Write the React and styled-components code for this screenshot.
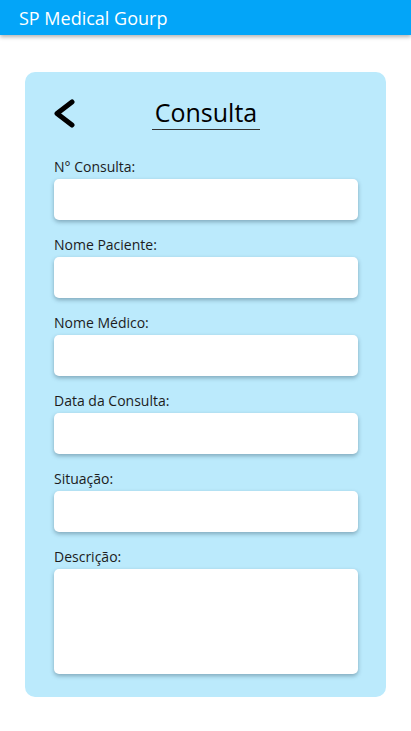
import React from 'react';
import styled, { createGlobalStyle } from 'styled-components';

const GlobalStyle = createGlobalStyle`
	* {
		box-sizing: border-box;
	}
	body {
		margin: 0;
		background: #ffffff;
		font-family: 'Open Sans', 'Noto Sans', sans-serif;
	}
`;

const fields = [
	{ label: 'N° Consulta:' },
	{ label: 'Nome Paciente:' },
	{ label: 'Nome Médico:' },
	{ label: 'Data da Consulta:' },
	{ label: 'Situação:' },
	{ label: 'Descrição:', tall: true },
];

const BackIcon = () => (
	<svg width='22' height='30' viewBox='0 0 22 30'>
		<polyline
			points='19,3 4,14.5 19,26'
			fill='none'
			stroke='#000'
			strokeWidth='5'
			strokeLinecap='round'
			strokeLinejoin='round'
		/>
	</svg>
);

const App = () => {
	return (
		<>
			<GlobalStyle />
			<Page>
				<AppBar>
					<AppTitle>SP Medical Gourp</AppTitle>
				</AppBar>
				<Card>
					<CardHeader>
						<BackButton>
							<BackIcon />
						</BackButton>
						<Title>Consulta</Title>
					</CardHeader>
					<Form>
						{fields.map((field) => (
							<Field key={field.label}>
								<Label>{field.label}</Label>
								<Input tall={field.tall} />
							</Field>
						))}
					</Form>
				</Card>
			</Page>
		</>
	);
};

const Page = styled.div`
	width: 411px;
	min-height: 731px;
`;

const AppBar = styled.header`
	height: 35px;
	background: #03a5f8;
	box-shadow: 0 2px 4px rgba(0, 0, 0, 0.3);
	display: flex;
	align-items: center;
	padding-left: 19px;
`;

const AppTitle = styled.h1`
	margin: 0;
	color: #ffffff;
	font-size: 18px;
	font-weight: 400;
	line-height: 24px;
`;

const Card = styled.main`
	margin: 37px 0 0 25px;
	width: 361px;
	background: #bbeafc;
	border-radius: 10px;
	padding: 25px 28px 23px 29px;
`;

const CardHeader = styled.div`
	display: grid;
	grid-template-columns: 1fr auto 1fr;
	align-items: center;
`;

const BackButton = styled.div`
	display: flex;
	align-items: center;
	margin-left: -1px;
`;

const Title = styled.h2`
	margin: 0;
	padding: 0 3px 2px;
	font-size: 25px;
	font-weight: 500;
	line-height: 30px;
	color: #000000;
	border-bottom: 1px solid #333333;
`;

const Form = styled.div`
	display: flex;
	flex-direction: column;
	gap: 15px;
	margin-top: 27px;
`;

const Field = styled.div`
	display: flex;
	flex-direction: column;
`;

const Label = styled.label`
	font-size: 14px;
	line-height: 20px;
	color: #1c1c1c;
	margin-bottom: 2px;
`;

const Input = styled.div`
	height: ${({ tall }) => (tall ? '105px' : '41px')};
	background: #ffffff;
	border-radius: 5px;
	box-shadow: 0 2px 4px rgba(40, 70, 90, 0.4);
`;

export default App;
